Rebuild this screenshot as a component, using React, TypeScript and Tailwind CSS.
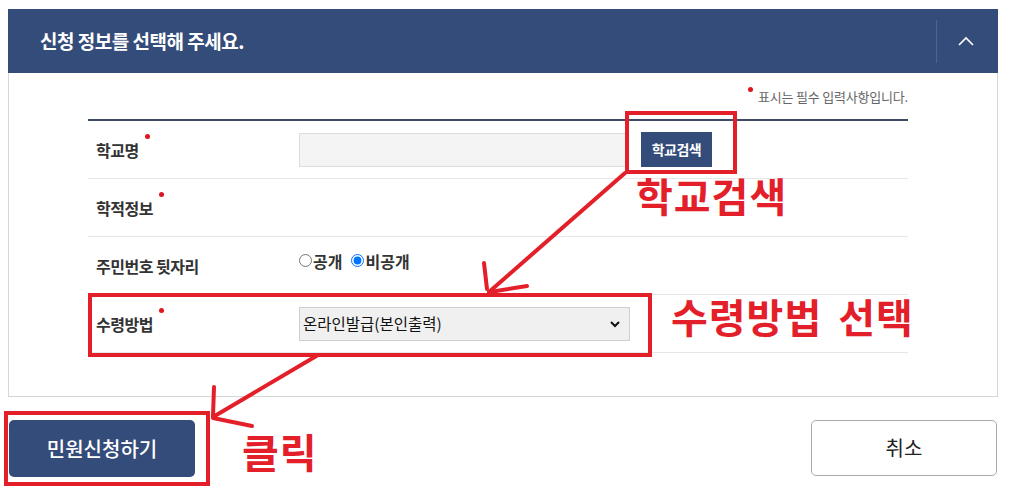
import React from 'react';

const font = { fontFamily: '"Noto Sans CJK KR", "Noto Sans", sans-serif' };

function Label({ text, required }: { text: string; required?: boolean }) {
    return (
        <div className="w-[211px] shrink-0 pl-[8px] flex items-center">
            <span className="relative text-[16px] font-semibold text-[#333] tracking-[-0.5px]">
                {text}
                {required && <span className="absolute -right-[11px] -top-[4px] w-[5px] h-[5px] rounded-full bg-[#e0141e]" />}
            </span>
        </div>
    );
}

export default function App() {
    return (
        <div className="relative w-[1014px] h-[496px] bg-white overflow-hidden" style={font}>
            {/* panel */}
            <div className="ml-[8px] mt-[9px] w-[990px]">
                <div className="h-[64px] bg-[#344c79] flex items-center">
                    <h2 className="pl-[32px] flex-1 text-[19px] font-bold text-white tracking-[-0.5px]">신청 정보를 선택해 주세요.</h2>
                    <div className="h-[43px] border-l border-[#4d6390]" />
                    <div className="w-[61px] flex justify-center pr-[4px]">
                        <svg width="16" height="10" viewBox="0 0 16 10" fill="none" stroke="white" strokeWidth="1.6">
                            <path d="M1 9 L8 2 L15 9" />
                        </svg>
                    </div>
                </div>
                <div className="h-[324px] border border-t-0 border-[#d6d6d6] pl-[79px] pr-[89px]">
                    <div className="h-[46px] flex items-center justify-end pt-[2px]">
                        <span className="relative text-[13px] text-[#666] tracking-[-0.2px]">
                            <span className="absolute -left-[10px] top-[0px] w-[5px] h-[5px] rounded-full bg-[#e0141e]" />
                            표시는 필수 입력사항입니다.
                        </span>
                    </div>
                    <div className="border-t-2 border-[#3d4a63]">
                        <div className="h-[58px] border-b border-[#e6e6e6] flex items-center">
                            <Label text="학교명" required />
                            <div className="w-[328px] h-[34px] bg-[#f4f4f4] border border-[#dcdcdc]" />
                            <button className="ml-[14px] w-[71px] h-[35px] bg-[#344c79] text-white text-[14px] font-semibold tracking-[-0.5px]">학교검색</button>
                        </div>
                        <div className="h-[58px] border-b border-[#e6e6e6] flex items-center">
                            <Label text="학적정보" required />
                        </div>
                        <div className="h-[58px] border-b border-[#e6e6e6] flex items-center">
                            <Label text="주민번호 뒷자리" />
                            <div className="flex items-center gap-[9px] -mt-[10px] text-[16px] font-semibold text-[#333]">
                                <label className="flex items-center gap-[1px]">
                                    <input type="radio" name="rrn" className="w-[13px] h-[13px] m-0" />
                                    공개
                                </label>
                                <label className="flex items-center gap-[1px]">
                                    <input type="radio" name="rrn" defaultChecked className="w-[13px] h-[13px] m-0" />
                                    비공개
                                </label>
                            </div>
                        </div>
                        <div className="h-[58px] border-b border-[#e6e6e6] flex items-center">
                            <Label text="수령방법" required />
                            <div className="relative w-[331px] h-[34px]">
                                <select className="appearance-none w-full h-full bg-[#f0f0f0] border border-[#cfcfcf] pl-[3px] text-[15.5px] text-[#111] outline-none" style={font}>
                                    <option>온라인발급(본인출력)</option>
                                </select>
                                <svg className="absolute right-[10px] top-[14px]" width="10" height="7" viewBox="0 0 10 7" fill="none" stroke="#111" strokeWidth="2">
                                    <path d="M1 1 L5 5 L9 1" />
                                </svg>
                            </div>
                        </div>
                    </div>
                </div>
            </div>

            {/* action buttons */}
            <div className="mt-[23px] pl-[9px] pr-[17px] flex justify-between">
                <button className="w-[186px] h-[57px] rounded-[5px] bg-[#344c79] text-white text-[20px] font-medium">민원신청하기</button>
                <button className="w-[186px] h-[56px] rounded-[5px] border border-[#aaa] bg-white text-[#222] text-[20px]">취소</button>
            </div>

            {/* red annotations */}
            <div className="absolute left-[625px] top-[111px] w-[112px] h-[63px] border-4 border-[#e3202a]" />
            <div className="absolute left-[88px] top-[293px] w-[564px] h-[64px] border-4 border-[#e3202a]" />
            <div className="absolute left-[4px] top-[411px] w-[206px] h-[75px] border-4 border-[#e3202a]" />
            <div className="absolute left-[636px] top-[175px] text-[40px] leading-none font-bold tracking-[1px] text-[#e3202a]">학교검색</div>
            <div className="absolute left-[671px] top-[296px] text-[40px] leading-none font-bold tracking-[1px] [word-spacing:6px] text-[#e3202a]">수령방법 선택</div>
            <div className="absolute left-[242px] top-[431px] text-[40px] leading-none font-bold tracking-[1px] text-[#e3202a]">클릭</div>
            <svg className="absolute left-0 top-0" width="1014" height="496" fill="none" stroke="#e3202a" strokeWidth="4" strokeLinecap="round">
                <path d="M625 173 L489 292" />
                <path d="M484 263 L487 289" />
                <path d="M527 286 L490 292" />
                <path d="M318 355 L213 417" />
                <path d="M214 387 L213 416" />
                <path d="M252 426 L213 418" />
            </svg>
        </div>
    );
}
